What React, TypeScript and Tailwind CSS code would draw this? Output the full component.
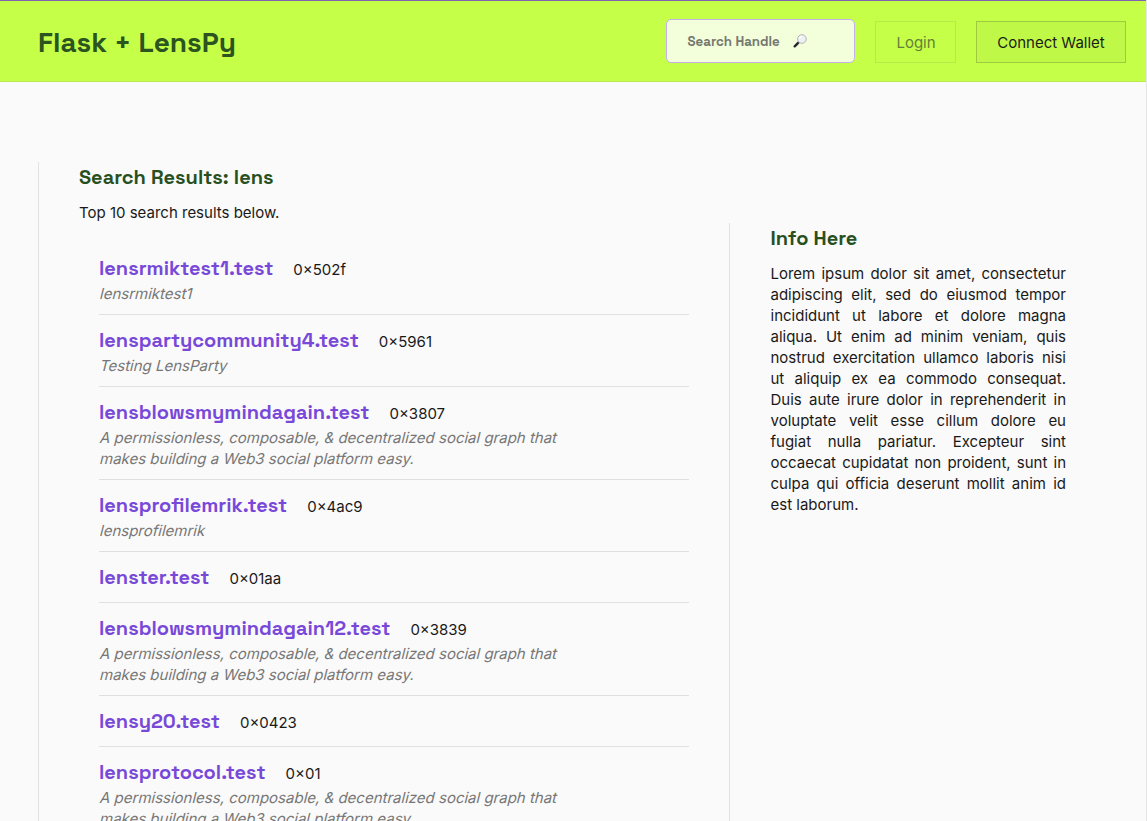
type Profile = { handle: string; id: string; bio?: string[] };

const GRAPH_BIO = [
  "A permissionless, composable, & decentralized social graph that",
  "makes building a Web3 social platform easy.",
];

const profiles: Profile[] = [
  { handle: "lensrmiktest1.test", id: "0×502f", bio: ["lensrmiktest1"] },
  { handle: "lenspartycommunity4.test", id: "0×5961", bio: ["Testing LensParty"] },
  { handle: "lensblowsmymindagain.test", id: "0×3807", bio: GRAPH_BIO },
  { handle: "lensprofilemrik.test", id: "0×4ac9", bio: ["lensprofilemrik"] },
  { handle: "lenster.test", id: "0×01aa" },
  { handle: "lensblowsmymindagain12.test", id: "0×3839", bio: GRAPH_BIO },
  { handle: "lensy20.test", id: "0×0423" },
  { handle: "lensprotocol.test", id: "0×01", bio: GRAPH_BIO },
];

const display = "font-['Space_Grotesk','Inter',sans-serif]";

function Magnifier() {
  return (
    <svg viewBox="0 0 14 14" className="h-3.5 w-3.5" fill="none">
      <path d="M1.7 12.3 5.4 8.7" stroke="#25242c" strokeWidth="2.4" strokeLinecap="round" />
      <path d="M5 9 6.3 7.7" stroke="#55545f" strokeWidth="1.3" />
      <circle cx="8.9" cy="5" r="4.3" fill="#eef1f1" stroke="#aaa9b5" strokeWidth="0.9" />
      <path d="M6.4 4.3Q7.2 2.4 9.2 2.3" stroke="#fff" strokeWidth="1.2" />
    </svg>
  );
}

function Header() {
  return (
    <header className="flex h-[82px] items-start justify-between border-t border-b border-t-[#8064b0] border-b-[#b9e84f] bg-[#c6ff48] pl-[38px] pr-5">
      <h1 className={`${display} mt-[21px] whitespace-nowrap text-[28px] leading-10 font-semibold text-[#2b5420]`}>
        Flask + LensPy
      </h1>
      <div className="flex items-start gap-5">
        <div className="mt-[18px] flex h-[44px] w-[189px] items-center gap-[13px] rounded-[5px] border border-[#c4b0e8] bg-[#f3fedb] pl-[20.5px]">
          <span className={`${display} whitespace-nowrap text-[13.33px] font-semibold text-[#757870]`}>Search Handle</span>
          <Magnifier />
        </div>
        <button className="mt-5 h-[42px] w-[81px] border border-[#b7e94b] pl-px text-[15px] text-[#658036]">Login</button>
        <button className="mt-5 h-[42px] w-[150px] border border-[#9dcb3d] bg-[#c0f848] text-[15px] whitespace-nowrap text-[#1b1e16]">
          Connect Wallet
        </button>
      </div>
    </header>
  );
}

function Row({ profile }: { profile: Profile }) {
  return (
    <li className="border-b border-[#e0e0e0] pt-2.5 pb-2.5">
      <div className="flex h-[30px] items-start gap-5">
        <a className={`${display} whitespace-nowrap text-[20px] leading-[30px] font-semibold text-[#7849d8]`}>
          {profile.handle}
        </a>
        <span className="pt-1.5 leading-[21px]">{profile.id}</span>
      </div>
      {profile.bio && (
        <p className="leading-[21px] text-[#777]">
          {profile.bio.map((line) => (
            <span key={line} className="block w-max origin-[0_16px] -skew-x-[14deg]">
              {line}
            </span>
          ))}
        </p>
      )}
    </li>
  );
}

export default function App() {
  return (
    <div className="h-[821px] overflow-hidden border-r border-[#e6e6e6] bg-[#fafafa] font-['Inter',sans-serif] text-[15px] leading-[21px] text-[#191919]">
      <Header />
      <main className="flex pl-[38px]">
        <section className="mt-[80px] h-[900px] w-[691px] border-l border-[#e2e2e2] pt-px pr-10 pl-10">
          <h2 className={`${display} text-[20px] leading-7 font-semibold text-[#28501f]`}>Search Results: lens</h2>
          <p className="mt-[11px]">Top 10 search results below.</p>
          <ul className="mt-5 ml-5">
            {profiles.map((p) => (
              <Row key={p.handle} profile={p} />
            ))}
          </ul>
        </section>
        <aside className="mt-[141px] h-[839px] w-[337px] border-l border-[#e2e2e2] pt-px pl-[40.5px]">
          <h2 className={`${display} text-[20px] leading-7 font-semibold text-[#28501f]`}>Info Here</h2>
          <p className="mt-[11px] text-justify">
            Lorem ipsum dolor sit amet, consectetur adipiscing elit, sed do eiusmod tempor incididunt ut labore et dolore
            magna aliqua. Ut enim ad minim veniam, quis nostrud exercitation ullamco laboris nisi ut aliquip ex ea commodo
            consequat. Duis aute irure dolor in reprehenderit in voluptate velit esse cillum dolore eu fugiat nulla
            pariatur. Excepteur sint occaecat cupidatat non proident, sunt in culpa qui officia deserunt mollit anim id est
            laborum.
          </p>
        </aside>
      </main>
    </div>
  );
}
